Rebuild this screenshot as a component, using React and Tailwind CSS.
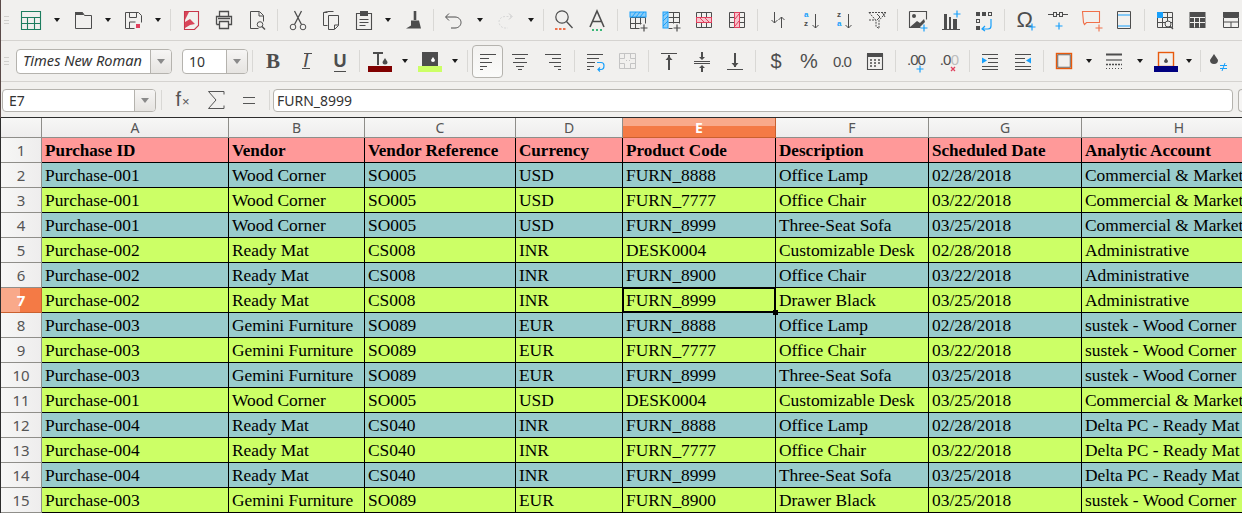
import React from "react";

const G = "#4d4d4d";
const B = "#18a0fb";
const R = "#e0405e";
const O = "#f0704a";

const S = ({ children, w = 24 }) => (
  <svg width={w} height="24" viewBox={`0 0 ${w} 24`} fill="none" stroke={G} strokeWidth="1" shapeRendering="geometricPrecision">
    {children}
  </svg>
);
const Plus = ({ x = 18, y = 20, c = B }) => <path d={`M${x - 3.5} ${y}h7M${x} ${y - 3.5}v7`} stroke={c} strokeWidth="1.2" />;
const tableLines = "M4.5 4.5h15v15h-15zM4.5 9.5h15M4.5 14.5h15M9.5 4.5v15M14.5 4.5v15";

const icons = {
  grid: <S><path d="M2.5 3.5h19v18h-19zM2.5 9.5h19M2.5 15.5h19M8.5 9.5v12M15.5 9.5v12" stroke="#1d7d5f" strokeWidth="1.1" /></S>,
  open: <S><path d="M4.5 20.5v-16h7l2 3h7v13z" /><path d="M4 4h7l2 3H4z" fill={G} stroke="none" /></S>,
  save: <S><path d="M4.5 4.5h13l3 3v7M4.5 4.5v16h9" /><path d="M8.5 4.5v5h7v-5M8.5 20v-6h6" /><rect x="15" y="16" width="4" height="4" fill={R} stroke="none" /></S>,
  pdf: <S><path d="M5.5 3.5h14v14l-4 4H5.500z" stroke="#c8374b" strokeWidth="1.1" /><path d="M6 4h4l-4 8zM6 14l5-3 5 5-5 1-5 3z" fill="#d9455a" stroke="none" /></S>,
  print: <S><path d="M7.500 8.500v-5h9v5M4.500 16.500v-8h15v8h-3M7.500 16.500h-3M7.500 13.500h9v7h-9z" strokeWidth="1.3" /><path d="M6 10.500h12" strokeWidth="1.500" /></S>,
  preview: <S><path d="M5.500 3.500h9l4 4v6M5.500 3.500v17h8" /><circle cx="15" cy="16.500" r="2.800" /><path d="M17 18.500l3 3" strokeWidth="1.400" /><path d="M14 4v4h4.500" /></S>,
  cut: <S><circle cx="7" cy="19" r="2.800" /><circle cx="17" cy="19" r="2.800" /><path d="M8.500 16.500l7-13.500M15.500 16.500l-7-13.500" strokeWidth="1.300" /></S>,
  copy: <S><path d="M8.500 4.500h-4v13h4" /><path d="M8.500 3.500h6M4.500 4.500l4-1" /><path d="M9.500 7.500h10v10l-4 4h-6z" /><path d="M15.500 21v-4h4" /></S>,
  paste: <S><path d="M8.500 5.500h-4v16h15v-16h-4" strokeWidth="1.100" /><rect x="8" y="3" width="8" height="5" fill={G} stroke="none" /><path d="M7.500 11.500h9M7.500 14.500h9M7.500 17.500h6" /></S>,
  brush: <S><path d="M14 3v9" strokeWidth="2.600" /><path d="M10 12.500h8l2 8H5l5-3z" fill={G} stroke="none" /></S>,
  undo: <S><path d="M7 5.500l-3.500 3.500 3.500 3.500" /><path d="M4 9h9c3.500 0 6 2.500 6 5.500S16.500 20 13 20H9" /></S>,
  redo: <S><path d="M15 5.500l3 3-3 3" stroke="#c9c9c9" /><path d="M18 8.500h-7c-3.500 0-6 2.500-6 5.500s2.500 6 6 6h3" stroke="#d8d8d8" strokeDasharray="2 1.500" /></S>,
  find: <S><circle cx="10" cy="9" r="6.200" strokeWidth="1.200" /><path d="M14.500 13.500l6 6.500" strokeWidth="1.300" /><path d="M3 21h2.500M7 21h2.500M11 21h2.500" stroke={O} strokeWidth="2" /></S>,
  format: <S><path d="M5 19L12 3l7 16M7.500 13.500h9" strokeWidth="1.600" /><path d="M7 22h2M11 22h2M15 22h2" stroke="#3cb878" strokeWidth="2" /></S>,
  insRow: <S><path d="M4.500 9.500h15v6M4.500 9.500v11h9M4.500 15.500h11M9.500 9.500v11M14.500 9.500v7" /><rect x="4" y="4" width="16" height="5" fill="#8ccdf7" stroke={B} /><path d="M6 9l4-5M10 9l4-5M14 9l4-5" stroke={B} /><Plus x="18" y="20" c={G} /></S>,
  insCol: <S><path d="M9.500 4.500h11v11M9.500 9.500h11M9.500 14.500h11M14.500 4.500v11M9.500 20.500h4" /><rect x="4" y="4" width="5" height="16" fill="#8ccdf7" stroke={B} /><path d="M4 8l5-4M4 13l5-5M4 18l5-5" stroke={B} /><Plus x="18" y="20" c={G} /></S>,
  delRow: <S><path d={tableLines} /><rect x="4.500" y="9.500" width="15" height="5" fill="#f7c3cb" stroke={R} /><path d="M8 10l4 4M13 10l4 4" stroke={R} /></S>,
  delCol: <S><path d={tableLines} /><rect x="9.500" y="4.500" width="5" height="15" fill="#f7c3cb" stroke={R} /><path d="M10 11l4-5M10 18l4-5" stroke={R} /></S>,
  sort: <S><path d="M8.500 4v11M5.500 12l3 3 3-3M15.500 20V9M12.500 12l3-3 3 3" /></S>,
  sortAsc: <S><text x="5" y="9" fontSize="8" fontFamily="Liberation Sans" fontWeight="700" fill={B} stroke="none">a</text><text x="5" y="18" fontSize="8" fontFamily="Liberation Sans" fontWeight="700" fill={G} stroke="none">z</text><path d="M16.500 6v14M13.500 17l3 3 3-3" /></S>,
  sortDesc: <S><text x="5" y="9" fontSize="8" fontFamily="Liberation Sans" fontWeight="700" fill={G} stroke="none">z</text><text x="5" y="18" fontSize="8" fontFamily="Liberation Sans" fontWeight="700" fill={B} stroke="none">a</text><path d="M16.500 6v14M13.500 17l3 3 3-3" /></S>,
  filter: <S><path d="M4 4.500h17l-7 8v8l-3-2v-6z" strokeDasharray="2 1" /><path d="M4 12h7" strokeDasharray="2 1" /><path d="M12 6l3 3-3 3M17 4l3 5" /></S>,
  image: <S><path d="M3.500 3.500h17v8M3.500 3.500v16h11" strokeWidth="1.100" /><circle cx="8" cy="8" r="2" fill={G} stroke="none" /><path d="M4 19l7-6 3 2 4-4 1 3-5 5z" fill={G} stroke="none" /><Plus x="18" y="20" /></S>,
  chart: <S><path d="M3 21.500h18" /><rect x="5" y="6" width="3" height="15" fill={G} stroke="none" /><rect x="10" y="9" width="2" height="12" fill={G} stroke="none" /><rect x="14" y="11" width="4" height="10" fill={G} stroke="none" /><Plus x="18" y="6" /></S>,
  pivot: <S><rect x="4.500" y="4.500" width="3" height="3" fill={G} /><rect x="10" y="4" width="4" height="4" fill={G} stroke="none" /><rect x="16.500" y="4.500" width="3" height="3" /><rect x="4.500" y="11.500" width="3" height="3" /><rect x="4" y="18" width="4" height="4" fill={G} stroke="none" /><path d="M19 11v7c0 2-1 3-3 3h-5M13 18l-3 3 3 2" stroke={B} strokeWidth="1.200" /></S>,
  omega: <S><text x="3.500" y="19" fontSize="22" fontFamily="Liberation Sans" fill={G} stroke="none">Ω</text><Plus x="19" y="19" /></S>,
  link: <S><path d="M2 6.500h5M17 6.500h5M10 6.500h4" /><rect x="7.500" y="4.500" width="3" height="4" /><rect x="13.500" y="4.500" width="3" height="4" /><Plus x="13" y="18" /></S>,
  comment: <S><path d="M3.500 3.500h17v11h-13l-2 2-1-2z" stroke={O} strokeWidth="1.100" /><path d="M16.500 20h7M20 16.500v7" stroke={O} strokeWidth="1.100" /></S>,
  header: <S><path d="M5.500 3.500h13v17h-13z" /><path d="M6 7h12M6 18h12" stroke={B} strokeWidth="1.200" /></S>,
  navig: <S><path d={tableLines} /><rect x="4" y="4" width="6" height="6" fill={B} stroke="none" /><circle cx="15" cy="16" r="3" fill="#f1f0ee" /><path d="M17 18l3 3" strokeWidth="1.300" /></S>,
  tblFill: <S><rect x="3.500" y="4" width="16" height="16" fill={G} stroke="none" /><path d="M4 9.500h15M8.500 9.500v10M13.500 9.500v10M4 14.500h15" stroke="#f1f0ee" /></S>,
  split: <S><path d="M4 4h16v5H4z" fill={G} stroke="none" /><path d="M4.500 9.500h15v10h-15zM4.500 14h15M12 14v5" /></S>,
  bold: <S><text x="12" y="19" textAnchor="middle" fontSize="21" fontWeight="700" fontFamily="Liberation Serif" fill={G} stroke="none">B</text></S>,
  italic: <S><text x="12" y="18" textAnchor="middle" fontSize="19" fontStyle="italic" fontFamily="Liberation Sans" fill={G} stroke="none">I</text><path d="M8 19.500h8M10 4.500h8" /></S>,
  under: <S><text x="12" y="18" textAnchor="middle" fontSize="18" fontWeight="700" fontFamily="Liberation Sans" fill={G} stroke="none">U</text><path d="M6 22.500h12" /></S>,
  fontColor: <S><path d="M5 4h10M10 4v12" strokeWidth="2" /><path d="M17 9l2.500 4a2.500 2.500 0 1 1-5 0z" fill={G} stroke="none" /><rect x="0" y="17" width="24" height="6" fill="#800000" stroke="none" /></S>,
  bgColor: <S><rect x="4" y="3" width="16" height="14" fill={G} stroke="none" /><path d="M15 8l2 3a2 2 0 1 1-4 0z" fill="#fff" stroke="none" /><rect x="0" y="17" width="24" height="6" fill="#ccff66" stroke="none" /></S>,
  left: <S><path d="M4 5.500h16M4 9.500h9M4 13.500h12M4 17.500h7M4 20.500h3" /></S>,
  center: <S><path d="M4 5.500h16M7 9.500h10M5 13.500h14M8 17.500h8M10 20.500h4" /></S>,
  right: <S><path d="M4 5.500h16M11 9.500h9M8 13.500h12M13 17.500h7M17 20.500h3" /></S>,
  wrap: <S><path d="M4 5.500h16M4 9.500h12M4 13.500h8M4 17.500h7M4 20.500h3" /><path d="M14 13.500h4c2 0 3 1 3 3s-1 4-3 4h-3M17 18.500l-2 2 2 2" stroke={B} strokeWidth="1.200" /></S>,
  merge: <S><path d={"M3.500 4.500h16v15h-16zM3.500 9.500h5M3.500 14.500h5M14.500 9.500h5M14.500 14.500h5M8.500 4.500v5M14.500 4.500v5M8.500 14.500v5M14.500 14.500v5"} stroke="#c4c4c4" /><path d="M10 11.500h1M13 11.500h1" stroke="#c4c4c4" /></S>,
  top: <S><path d="M4 4.500h16" /><path d="M12 6v15" strokeWidth="2" /><path d="M8.500 11l3.500-4 3.500 4z" fill={G} stroke="none" /></S>,
  middle: <S><path d="M4 12.500h16M4 14.500h16" /><path d="M12 3v7M12 17v6" strokeWidth="2" /><path d="M9 8l3 3 3-3zM9 19l3-3 3 3z" fill={G} stroke="none" /></S>,
  bottom: <S><path d="M4 20.500h16" /><path d="M12 4v14" strokeWidth="2" /><path d="M8.500 14l3.500 4 3.500-4z" fill={G} stroke="none" /></S>,
  dollar: <S><text x="12" y="19" textAnchor="middle" fontSize="20" fontFamily="Liberation Sans" fill={G} stroke="none">$</text></S>,
  percent: <S><text x="12" y="19" textAnchor="middle" fontSize="20" fontFamily="Liberation Sans" fill={G} stroke="none">%</text></S>,
  zero: <S><text x="12" y="18" textAnchor="middle" fontSize="15" letterSpacing="-1" fontFamily="Liberation Sans" fill={G} stroke="none">0.0</text></S>,
  cal: <S><path d="M4.500 5.500h15v15h-15z" strokeWidth="1.100" /><rect x="4" y="4" width="16" height="4" fill={G} stroke="none" /><path d="M7 11h2M11 11h2M15 11h2M7 14h2M11 14h2M15 14h2M7 17h2M11 17h2" strokeWidth="1.600" /></S>,
  addDec: <S><text x="12" y="16" textAnchor="middle" fontSize="15" letterSpacing="-1" fontFamily="Liberation Sans" fill={G} stroke="none">.00</text><Plus x="16" y="20" /></S>,
  delDec: <S><text x="8" y="16" textAnchor="middle" fontSize="15" letterSpacing="-1" fontFamily="Liberation Sans" fill={G} stroke="none">.0</text><text x="18" y="16" textAnchor="middle" fontSize="15" fontFamily="Liberation Sans" fill="#bdbdbd" stroke="none">0</text><path d="M14 18l4 4M18 18l-4 4" stroke={R} strokeWidth="1.300" /></S>,
  indent: <S><path d="M4 5.500h16M10 9.500h10M10 13.500h10M4 17.500h16M4 20.500h16" /><path d="M4 8.500l5 3-5 3z" fill={B} stroke="none" /></S>,
  outdent: <S><path d="M4 5.500h16M4 9.500h10M4 13.500h10M4 17.500h16M4 20.500h16" /><path d="M20 8.500l-5 3 5 3z" fill={B} stroke="none" /></S>,
  border: <S><rect x="4.500" y="4.500" width="15" height="15" stroke="#e8590c" strokeWidth="1.400" /><rect x="5.800" y="5.800" width="12.400" height="12.400" stroke={G} strokeWidth=".8" /></S>,
  line: <S><path d="M4 5.500h16" strokeWidth="2" /><path d="M4 11h16" strokeWidth="1.200" /><path d="M4 15.500h16" strokeWidth="1.500" strokeDasharray="2 1" /><path d="M4 19.500h16" strokeDasharray="1 2" /></S>,
  borderColor: <S><rect x="4.500" y="3.500" width="15" height="14" stroke="#e8590c" strokeWidth="1.400" /><path d="M12 9l2 3a2 2 0 1 1-4 0z" fill={G} stroke="none" /><rect x="0" y="17" width="24" height="6" fill="#000080" stroke="none" /></S>,
  cond: <S><path d="M9 5l4 6a4 4 0 1 1-8 0z" fill={G} stroke="none" /><path d="M15 16.500h7M15 19.500h7M20 14l-3 8" stroke={B} /></S>,
  sum: <S><path d="M20 6.500V3.500H4.500L12 12l-7.500 8.500H20v-3" stroke="#555" /></S>,
  eq: <S><path d="M6 9.500h12M6 15.500h12" stroke="#555" strokeWidth="1.200" /></S>,
};

const Arrow = ({ w = 17 }) => (
  <div className="flex justify-center shrink-0" style={{ width: w }}>
    <div className="w-0 h-0 border-x-[3.500px] border-x-transparent border-t-[4px] border-t-[#1a1a1a]" />
  </div>
);
const Sep = () => (
  <div className="w-[8px] h-[22px] shrink-0 flex justify-center">
    <div className="w-px h-full bg-[#d9d8d5]" />
  </div>
);
const I = ({ n, w = 33 }) => (
  <div className="h-[24px] shrink-0 flex justify-center items-center" style={{ width: w }}>
    {icons[n]}
  </div>
);
const Grip = () => (
  <div className="w-[14px] shrink-0 flex justify-start pl-[4px]">
    <div className="w-[5px] h-[8px] border-y border-[#d0cfcc] relative">
      <div className="h-px bg-[#d0cfcc] mt-[2.5px]" />
    </div>
  </div>
);

const Combo = ({ w, text, italic, btn = 21, h = 25, font = 14 }) => (
  <div className="flex shrink-0 rounded-[4px] border border-[#b5b3ae] bg-white overflow-hidden" style={{ width: w, height: h }}>
    <div className={`flex-1 flex items-center pl-[6px] text-[#333] font-['Noto_Sans',sans-serif] ${italic ? "italic" : ""}`} style={{ fontSize: font }}>
      {text}
    </div>
    <div className="border-l border-[#b5b3ae] bg-gradient-to-b from-[#f6f5f4] to-[#e6e4e1] flex items-center justify-center" style={{ width: btn }}>
      <div className="w-0 h-0 border-x-[4px] border-x-transparent border-t-[5px] border-t-[#8a8a8a]" />
    </div>
  </div>
);

const Row1 = () => (
  <div className="h-[41px] flex items-center border-b border-[#d5d3d0]">
    <Grip />
    <I n="grid" /><Arrow w={19} /><I n="open" /><Arrow w={17} /><I n="save" /><Arrow w={17} /><Sep />
    <I n="pdf" /><I n="print" /><I n="preview" /><Sep />
    <I n="cut" /><I n="copy" /><I n="paste" /><Arrow w={16} /><I n="brush" /><Sep />
    <I n="undo" /><Arrow w={19} /><I n="redo" /><Arrow w={17} /><Sep />
    <I n="find" /><I n="format" /><Sep />
    <I n="insRow" /><I n="insCol" /><I n="delRow" /><I n="delCol" /><Sep />
    <I n="sort" /><I n="sortAsc" /><I n="sortDesc" /><I n="filter" /><Sep />
    <I n="image" /><I n="chart" /><I n="pivot" /><Sep />
    <I n="omega" /><I n="link" /><I n="comment" /><I n="header" /><Sep />
    <I n="navig" /><I n="tblFill" /><I n="split" />
  </div>
);

const Row2 = () => (
  <div className="h-[41px] flex items-center border-b border-[#d5d3d0]">
    <div className="w-[16px] shrink-0 flex pl-[4px]">
      <div className="w-[5px] h-[8px] border-y border-[#d0cfcc]"><div className="h-px bg-[#d0cfcc] mt-[2.5px]" /></div>
    </div>
    <Combo w={156} text="Times New Roman" italic font={14.6} />
    <div className="w-[10px] shrink-0" />
    <Combo w={66} text="10" />
    <Sep />
    <div className="w-[1px] shrink-0" />
    <I n="bold" w={31} /><I n="italic" w={36} /><I n="under" w={31} /><Sep />
    <I n="fontColor" w={34} /><Arrow w={16} /><I n="bgColor" w={34} /><Arrow w={16} /><Sep />
    <div className="w-[1px] shrink-0" />
    <div className="w-[31px] h-[33px] shrink-0 rounded-[4px] border border-[#b5b3ae] bg-gradient-to-b from-[#f3f2f0] to-[#fbfbfa] flex items-center justify-center"><I n="left" w={24} /></div>
    <I n="center" /><I n="right" /><div className="w-[1px] shrink-0" /><Sep />
    <I n="wrap" /><I n="merge" /><Sep />
    <I n="top" /><I n="middle" /><I n="bottom" /><Sep />
    <I n="dollar" /><I n="percent" /><I n="zero" /><I n="cal" /><Sep />
    <I n="addDec" /><I n="delDec" /><Sep />
    <I n="indent" /><I n="outdent" /><Sep />
    <I n="border" /><Arrow w={17} /><I n="line" /><Arrow w={19} /><I n="borderColor" /><Arrow w={14} /><Sep />
    <I n="cond" w={26} />
  </div>
);

const FormulaBar = () => (
  <div className="h-[35px] flex items-center pl-[2px] pt-[1px]">
    <Combo w={154} text="E7" btn={21} h={23} />
    <div className="w-[10px] shrink-0 flex justify-center"><div className="w-px h-[20px] bg-[#d9d8d5]" /></div>
    <div className="w-[33px] shrink-0 flex justify-center items-baseline text-[#555] font-['Liberation_Sans',sans-serif] text-[20px] font-light leading-[24px]">f<span className="text-[13px] ml-[1px]">×</span></div>
    <I n="sum" />
    <I n="eq" />
    <div className="w-[8px] shrink-0 flex justify-center"><div className="w-px h-[20px] bg-[#d9d8d5]" /></div>
    <div className="w-[960px] h-[23px] shrink-0 rounded-[4px] border border-[#b5b3ae] bg-white flex items-center pl-[3px] text-[14px] text-[#333] font-['Noto_Sans',sans-serif]">FURN_8999</div>
    <div className="w-[5px] shrink-0" />
    <div className="w-[10px] h-[23px] shrink-0 rounded-l-[4px] border-l border-y border-[#b5b3ae] bg-[#f6f5f4]" />
  </div>
);

const cols = ["A", "B", "C", "D", "E", "F", "G", "H"];
const gridCls = "grid grid-cols-[42px_187px_136px_151px_107px_153px_153px_153px_195px]";
const teal = "bg-[#99cccc]";
const lime = "bg-[#ccff66]";

const CM = "Commercial & Marketing";
const rows = [
  ["Purchase-001", "Wood Corner", "SO005", "USD", "FURN_8888", "Office Lamp", "02/28/2018", CM],
  ["Purchase-001", "Wood Corner", "SO005", "USD", "FURN_7777", "Office Chair", "03/22/2018", CM],
  ["Purchase-001", "Wood Corner", "SO005", "USD", "FURN_8999", "Three-Seat Sofa", "03/25/2018", CM],
  ["Purchase-002", "Ready Mat", "CS008", "INR", "DESK0004", "Customizable Desk", "02/28/2018", "Administrative"],
  ["Purchase-002", "Ready Mat", "CS008", "INR", "FURN_8900", "Office Chair", "03/22/2018", "Administrative"],
  ["Purchase-002", "Ready Mat", "CS008", "INR", "FURN_8999", "Drawer Black", "03/25/2018", "Administrative"],
  ["Purchase-003", "Gemini Furniture", "SO089", "EUR", "FURN_8888", "Office Lamp", "02/28/2018", "sustek - Wood Corner"],
  ["Purchase-003", "Gemini Furniture", "SO089", "EUR", "FURN_7777", "Office Chair", "03/22/2018", "sustek - Wood Corner"],
  ["Purchase-003", "Gemini Furniture", "SO089", "EUR", "FURN_8999", "Three-Seat Sofa", "03/25/2018", "sustek - Wood Corner"],
  ["Purchase-001", "Wood Corner", "SO005", "USD", "DESK0004", "Customizable Desk", "03/25/2018", CM],
  ["Purchase-004", "Ready Mat", "CS040", "INR", "FURN_8888", "Office Lamp", "02/28/2018", "Delta PC - Ready Mat"],
  ["Purchase-004", "Ready Mat", "CS040", "INR", "FURN_7777", "Office Chair", "03/22/2018", "Delta PC - Ready Mat"],
  ["Purchase-004", "Ready Mat", "CS040", "INR", "FURN_8999", "Three-Seat Sofa", "03/25/2018", "Delta PC - Ready Mat"],
  ["Purchase-003", "Gemini Furniture", "SO089", "EUR", "FURN_8900", "Drawer Black", "03/25/2018", "sustek - Wood Corner"],
];
const headers = ["Purchase ID", "Vendor", "Vendor Reference", "Currency", "Product Code", "Description", "Scheduled Date", "Analytic Account"];

const RowHead = ({ n, active }) =>
  active ? (
    <div className="h-[25px] border-r border-b border-[#c9602f] bg-[#f47a45] relative flex items-center justify-center pl-px text-white font-bold text-[15px] font-['Noto_Sans',sans-serif]">
      <div className="absolute left-0 top-0 bottom-0 w-[20px] bg-[#f9a98a]" />
      <span className="relative">{n}</span>
    </div>
  ) : (
    <div className="h-[25px] border-r border-b border-[#8f8e8a] bg-gradient-to-r from-[#f7f7f6] to-[#eeeded] flex items-center justify-center pl-px text-[#555] text-[15px] font-['Noto_Sans',sans-serif]">{n}</div>
  );

const Cell = ({ t, bg, bold }) => (
  <div className={`h-[25px] border-r border-b border-black pl-[3px] overflow-hidden whitespace-nowrap text-black font-['Liberation_Serif',serif] ${bold ? "leading-[26px] text-[17.1px] font-bold" : "leading-[24px] text-[17.4px]"} ${bg}`}>
    {t}
  </div>
);

const Sheet = () => (
  <div className="w-[1242px] overflow-hidden border-t border-[#2d2d2d] border-l border-l-[#2d2d2d]">
    <div className={`${gridCls} -ml-[1px]`}>
      <div className="h-[20px] border-r border-b border-[#8f8e8a] bg-gradient-to-b from-[#f7f7f6] to-[#eeeded]" />
      {cols.map((c) =>
        c === "E" ? (
          <div key={c} className="h-[20px] border-r border-b border-[#c9602f] relative bg-[#f47a45] flex items-center justify-center text-white font-bold text-[14px] font-['Noto_Sans',sans-serif]">
            <div className="absolute left-0 right-0 top-0 h-[8px] bg-[#f9a98a]" />
            <span className="relative">{c}</span>
          </div>
        ) : (
          <div key={c} className="h-[20px] border-r border-b border-[#8f8e8a] bg-gradient-to-b from-[#f7f7f6] to-[#eeeded] flex items-center justify-center text-[#555] text-[14px] font-['Noto_Sans',sans-serif]">{c}</div>
        )
      )}
    </div>
    <div className={`${gridCls} -ml-[1px]`}>
      <RowHead n={1} />
      {headers.map((h) => <Cell key={h} t={h} bold bg="bg-[#ff9999]" />)}
    </div>
    {rows.map((r, i) => (
      <div key={i} className={`${gridCls} -ml-[1px]`}>
        <RowHead n={i + 2} active={i === 5} />
        {r.map((t, j) => <Cell key={j} t={t} bg={i % 2 === 0 ? teal : lime} />)}
      </div>
    ))}
  </div>
);

export default function App() {
  return (
    <div className="w-[1242px] h-[513px] overflow-hidden bg-[#f1f0ee] relative">
      <Row1 />
      <Row2 />
      <FormulaBar />
      <Sheet />
      <div className="absolute left-0 top-0 w-px h-[118px] bg-[#5a4a48] pointer-events-none" />
      <div className="absolute left-[622px] top-[287px] w-[154px] h-[26px] border-2 border-black pointer-events-none" />
      <div className="absolute left-[773px] top-[310px] w-[5px] h-[5px] bg-black pointer-events-none" />
    </div>
  );
}
